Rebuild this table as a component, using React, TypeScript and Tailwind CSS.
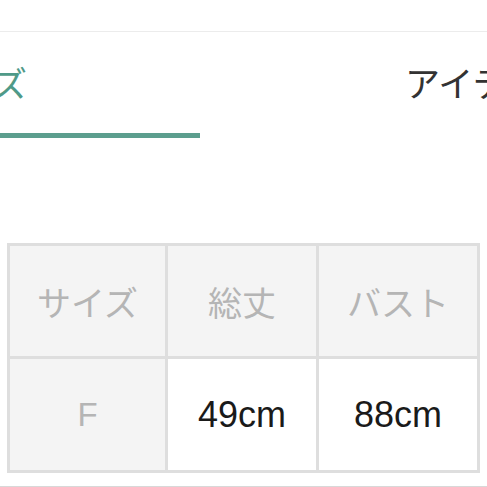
export default function App() {
  const jp = { fontFamily: '"Noto Sans CJK JP", "Liberation Sans", sans-serif' };
  const num = { fontFamily: '"Liberation Sans", Arial, sans-serif' };
  return (
    <div className="w-[487px] h-[487px] bg-white overflow-hidden relative" style={jp}>
      <div className="h-[31px]" />
      <div className="border-t border-[#ececec]" />
      <div className="flex h-[106px] overflow-hidden">
        <div className="w-[200px] shrink-0 h-[106px] border-b-[5px] border-[#5c9e8e] pt-[29px]">
          <div className="-ml-[77px] text-[35px] leading-[42px] text-[#4f9a88] whitespace-nowrap">サイズ</div>
        </div>
        <div className="ml-[205px] pt-[29px] shrink-0">
          <div className="text-[35px] leading-[42px] text-[#333] whitespace-nowrap">アイテム</div>
        </div>
      </div>
      <div className="h-[105px]" />
      <div className="ml-[7px] w-[473px] bg-[#dedede] p-[3px] grid grid-cols-[155px_148px_158px] grid-rows-[110px_111px] gap-[3px]">
        <div className="bg-[#f4f4f4] flex items-center justify-center text-[34px] text-[#b5b5b5]">サイズ</div>
        <div className="bg-[#f4f4f4] flex items-center justify-center text-[34px] text-[#b5b5b5]">総丈</div>
        <div className="bg-[#f4f4f4] flex items-center justify-center text-[34px] text-[#b5b5b5]">バスト</div>
        <div className="bg-[#f4f4f4] flex items-center justify-center text-[33px] text-[#b5b5b5]" style={num}>F</div>
        <div className="bg-white flex items-center justify-center text-[36px] text-[#1a1a1a]" style={num}>49cm</div>
        <div className="bg-white flex items-center justify-center text-[36px] text-[#1a1a1a]" style={num}>88cm</div>
      </div>
      <div className="absolute left-0 right-0 top-[486px] h-px bg-[#d8d8d8]" />
    </div>
  );
}
